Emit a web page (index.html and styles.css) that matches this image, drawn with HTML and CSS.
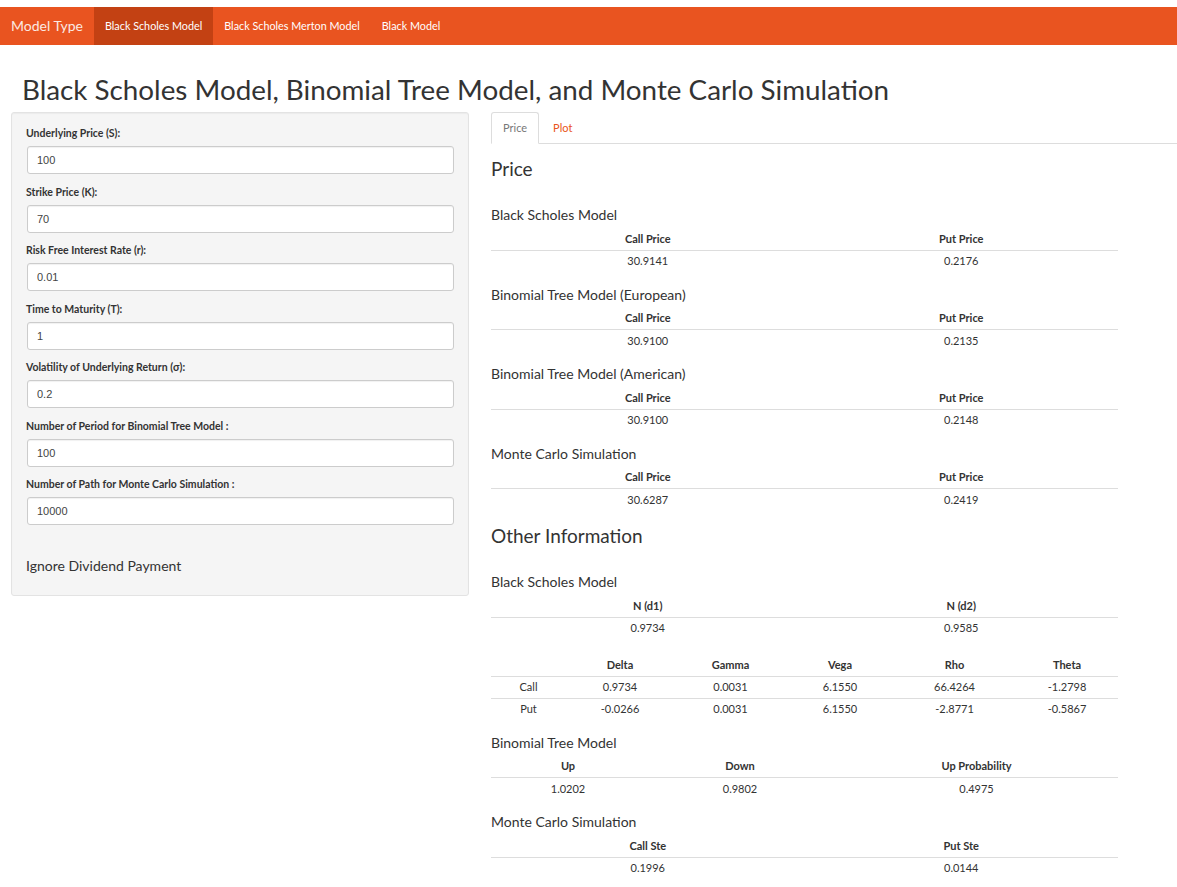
FILE: index.html
```html
<!DOCTYPE html>
<html lang="en">
<head>
<meta charset="utf-8">
<title>Black Scholes Model</title>
<link rel="stylesheet" href="styles.css">
</head>
<body>
<nav class="navbar">
  <span class="brand">Model Type</span>
  <a class="nav-item active">Black Scholes Model</a>
  <a class="nav-item">Black Scholes Merton Model</a>
  <a class="nav-item">Black Model</a>
</nav>
<main class="page">
  <h1 class="title">Black Scholes Model, Binomial Tree Model, and Monte Carlo Simulation</h1>
  <div class="row">
    <aside class="well">
      <div class="group"><label>Underlying Price (S):</label><input class="field" value="100"></div>
      <div class="group"><label>Strike Price (K):</label><input class="field" value="70"></div>
      <div class="group"><label>Risk Free Interest Rate (r):</label><input class="field" value="0.01"></div>
      <div class="group"><label>Time to Maturity (T):</label><input class="field" value="1"></div>
      <div class="group"><label>Volatility of Underlying Return (σ):</label><input class="field" value="0.2"></div>
      <div class="group"><label>Number of Period for Binomial Tree Model :</label><input class="field" value="100"></div>
      <div class="group"><label>Number of Path for Monte Carlo Simulation :</label><input class="field" value="10000"></div>
      <div class="note">Ignore Dividend Payment</div>
    </aside>
    <section class="content">
      <div class="tabs">
        <span class="tab active">Price</span>
        <span class="tab">Plot</span>
      </div>
      <h3 class="h3">Price</h3>

      <h4 class="sec-h first">Black Scholes Model</h4>
      <table class="tbl two">
        <tr><th>Call Price</th><th>Put Price</th></tr>
        <tr><td>30.9141</td><td>0.2176</td></tr>
      </table>

      <h4 class="sec-h">Binomial Tree Model (European)</h4>
      <table class="tbl two">
        <tr><th>Call Price</th><th>Put Price</th></tr>
        <tr><td>30.9100</td><td>0.2135</td></tr>
      </table>

      <h4 class="sec-h">Binomial Tree Model (American)</h4>
      <table class="tbl two">
        <tr><th>Call Price</th><th>Put Price</th></tr>
        <tr><td>30.9100</td><td>0.2148</td></tr>
      </table>

      <h4 class="sec-h">Monte Carlo Simulation</h4>
      <table class="tbl two">
        <tr><th>Call Price</th><th>Put Price</th></tr>
        <tr><td>30.6287</td><td>0.2419</td></tr>
      </table>

      <h3 class="h3 other">Other Information</h3>

      <h4 class="sec-h first">Black Scholes Model</h4>
      <table class="tbl two">
        <tr><th>N (d1)</th><th>N (d2)</th></tr>
        <tr><td>0.9734</td><td>0.9585</td></tr>
      </table>
      <table class="tbl greeks">
        <colgroup><col class="g0"><col class="g1"><col class="g2"><col class="g3"><col class="g4"><col class="g5"></colgroup>
        <tr><th></th><th>Delta</th><th>Gamma</th><th>Vega</th><th>Rho</th><th>Theta</th></tr>
        <tr class="sep"><td>Call</td><td>0.9734</td><td>0.0031</td><td>6.1550</td><td>66.4264</td><td>-1.2798</td></tr>
        <tr><td>Put</td><td>-0.0266</td><td>0.0031</td><td>6.1550</td><td>-2.8771</td><td>-0.5867</td></tr>
      </table>

      <h4 class="sec-h">Binomial Tree Model</h4>
      <table class="tbl three">
        <colgroup><col class="b0"><col class="b1"><col class="b2"></colgroup>
        <tr><th>Up</th><th>Down</th><th>Up Probability</th></tr>
        <tr><td>1.0202</td><td>0.9802</td><td>0.4975</td></tr>
      </table>

      <h4 class="sec-h">Monte Carlo Simulation</h4>
      <table class="tbl two">
        <tr><th>Call Ste</th><th>Put Ste</th></tr>
        <tr><td>0.1996</td><td>0.0144</td></tr>
      </table>
    </section>
  </div>
</main>
</body>
</html>
```

FILE: styles.css
```css
html, body {
  margin: 0;
  padding: 0;
  background: #fff;
}
body {
  font-family: Lato, "Open Sans", "DejaVu Sans", sans-serif;
  color: #333;
  overflow: hidden;
}
.navbar {
  margin-top: 7px;
  height: 38px;
  background: #e95420;
  display: flex;
  align-items: stretch;
  padding-left: 11px;
}
.brand {
  display: flex;
  align-items: center;
  font-size: 14px;
  color: #fbe9e2;
  margin-right: 11px;
  padding-bottom: 1px;
}
.nav-item {
  display: flex;
  align-items: center;
  padding: 0 11px 1px 11px;
  font-size: 10.8px;
  color: #fff;
}
.nav-item.active {
  background: #c34113;
}
.page {
  padding-left: 11px;
}
.title {
  margin: 30px 0 7px 11px;
  font-size: 27.8px;
  line-height: 30px;
  font-weight: 400;
  color: #333;
  white-space: nowrap;
}
.row {
  display: flex;
  align-items: flex-start;
  gap: 22px;
}
.well {
  width: 458px;
  box-sizing: border-box;
  flex: none;
  background: #f5f5f5;
  border: 1px solid #e3e3e3;
  border-radius: 3px;
  box-shadow: inset 0 1px 1px rgba(0,0,0,0.04);
  padding: 13px 14px 20px 14px;
}
.group {
  display: flex;
  flex-direction: column;
  margin-bottom: 10.5px;
}
.group label {
  font-size: 10.5px;
  font-weight: 700;
  line-height: 15px;
  margin-bottom: 5px;
  color: #333;
}
.field {
  box-sizing: border-box;
  height: 28px;
  width: 427px;
  margin-left: 1px;
  border: 1px solid #ccc;
  border-radius: 3px;
  background: #fff;
  box-shadow: inset 0 1px 1px rgba(0,0,0,0.06);
  padding: 0 9px;
  font-family: "Liberation Sans", Arial, sans-serif;
  font-size: 11px;
  color: #444;
}
.note {
  margin-top: 32px;
  font-size: 14px;
  line-height: 18px;
  color: #333;
}
.content {
  flex: 1;
  min-width: 0;
}
.tabs {
  display: flex;
  border-bottom: 1px solid #ddd;
  height: 31px;
}
.tab {
  height: 31px;
  line-height: 30px;
  padding: 0 11px;
  font-size: 11px;
  color: #e95420;
  margin-right: 2px;
  box-sizing: border-box;
  border: 1px solid transparent;
}
.tab.active {
  height: 32px;
  color: #777;
  background: #fff;
  border: 1px solid #ddd;
  border-bottom-color: #fff;
  border-radius: 3px 3px 0 0;
}
.h3 {
  margin: 14px 0 0 0;
  font-size: 19px;
  line-height: 22px;
  font-weight: 400;
  color: #333;
}
.h3.other {
  margin-top: 14.5px;
}
.sec-h {
  margin: 14.5px 0 5px 0;
  font-size: 14px;
  line-height: 16px;
  font-weight: 400;
  color: #333;
}
.sec-h.first {
  margin-top: 27px;
}
.tbl {
  width: 627px;
  border-collapse: collapse;
  table-layout: fixed;
  font-size: 11px;
  color: #333;
}
.tbl th, .tbl td {
  height: 22px;
  padding: 0 4px;
  line-height: 14px;
  text-align: center;
  vertical-align: middle;
  box-sizing: border-box;
}
.tbl th {
  font-weight: 700;
  border-bottom: 1px solid #ddd;
}
.tbl .sep td {
  border-bottom: 1px solid #ddd;
}
.tbl.two th, .tbl.two td {
  width: 50%;
}
.greeks {
  margin-top: 15px;
}
.g0 { width: 75px; }
.g1 { width: 108px; }
.g2 { width: 113px; }
.g3 { width: 106px; }
.g4 { width: 123px; }
.g5 { width: 102px; }
.b0 { width: 154px; }
.b1 { width: 190px; }
.b2 { width: 283px; }
```
